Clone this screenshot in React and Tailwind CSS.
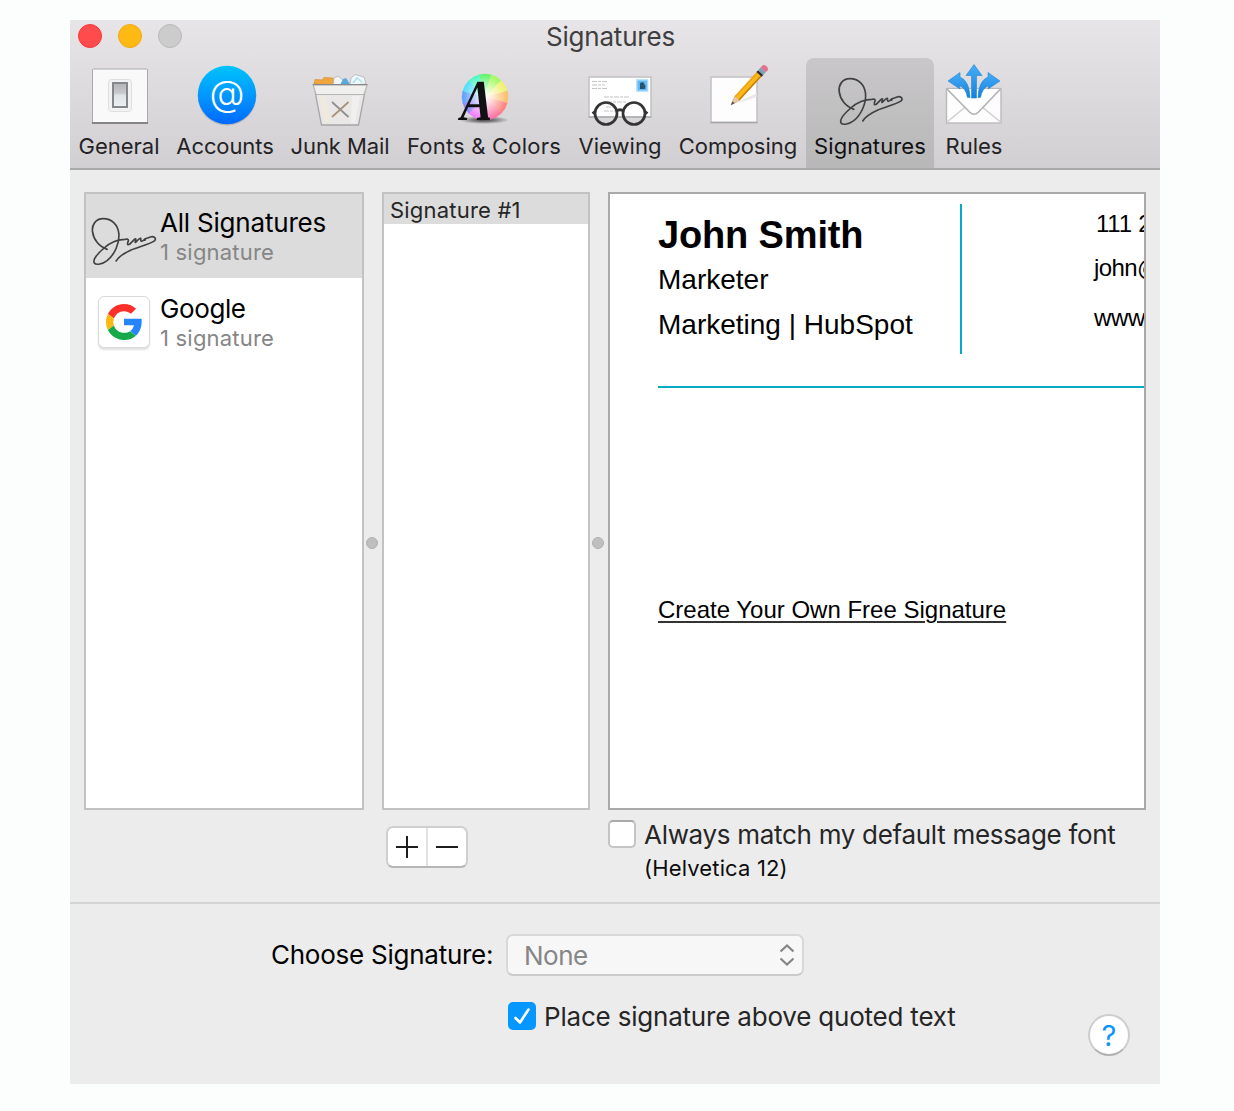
const SIGNATURE_PATH =
  "M217 213 C224 200 240 190 262 180 C285 171 320 162 333 152 C338 144 330 138 320 141 L305 146 C299 150 301 152 304 150 M303 147 C296 155 290 157 291 148 C292 141 285 146 276 157 L274 157 C277 147 277 144 272 148 L257 163 C250 167 250 160 254 152 C254 145 245 148 238 149 C225 148 200 157 181 174 C160 192 147 207 151 218 C157 227 177 222 190 212 C212 194 228 160 225 130 C222 105 205 86 178 86 C155 86 144 105 146 124 C149 148 165 170 190 178";

function Scribble({ transform }) {
  return (
    <g transform={transform} fill="none" stroke="#414143" strokeWidth="5" strokeLinecap="round" strokeLinejoin="round">
      <path d={SIGNATURE_PATH} />
    </g>
  );
}

function GeneralIcon() {
  return (
    <>
      <defs>
        <linearGradient id="rocker" x1="0" y1="0" x2="0" y2="1">
          <stop offset="0" stopColor="#b4b4b6" />
          <stop offset=".42" stopColor="#c9c9cb" />
          <stop offset=".5" stopColor="#dfe3e6" />
          <stop offset="1" stopColor="#eff1f3" />
        </linearGradient>
      </defs>
      <rect x="92.5" y="69" width="55" height="54.5" rx="1" fill="#f9f9fa" stroke="#a9a9ac" />
      <path d="M92 123h56" stroke="#858588" strokeWidth="2" />
      <rect x="108.5" y="79.5" width="23" height="32" rx="3" fill="#f3f3f4" stroke="#dededf" />
      <rect x="113" y="83" width="14" height="24" fill="url(#rocker)" stroke="#85888b" strokeWidth="2" />
    </>
  );
}

function AccountsIcon() {
  return (
    <>
      <defs>
        <linearGradient id="at" x1="0" y1="0" x2="0" y2="1">
          <stop offset="0" stopColor="#00c3fb" />
          <stop offset=".5" stopColor="#0298ff" />
          <stop offset="1" stopColor="#0069fc" />
        </linearGradient>
      </defs>
      <circle cx="227" cy="96.3" r="29.3" fill="#000" opacity=".14" />
      <circle cx="227" cy="95" r="29.2" fill="url(#at)" />
      <text x="227" y="106" textAnchor="middle" fill="#fff" fontSize="36" fontFamily="Inter, sans-serif" fontWeight="300">@</text>
    </>
  );
}

function JunkIcon() {
  return (
    <>
      <path d="M314 84 L315 79.5 L322 80 L324 77.5 L333 78 L334 85z" fill="#f0a63f" stroke="#d88f38" strokeWidth=".7" />
      <path d="M333 85 L334 78 L338 76 L343 80 L345 85z" fill="#f4f6f6" stroke="#aab0b4" strokeWidth=".8" />
      <path d="M340 85 L343 79 L346 78 L350 84 V86z" fill="#59a9df" />
      <path d="M350 85 L351 78 L355 74.5 L364 77 L366 84z" fill="#eef7fa" stroke="#aab5bb" strokeWidth=".8" />
      <path d="M353 83 L357 78 L362 82" fill="none" stroke="#a9dff0" strokeWidth="1.4" />
      <path d="M315.5 94 L321.5 125 H358.5 L364.5 94z" fill="#e9e8e7" stroke="#a5a5a6" strokeWidth="1.3" />
      <path d="M319 96 L325 122 H330 L326 96z" fill="#efe9de" />
      <path d="M352 96 H360 L355 123 H351z" fill="#f0f0f0" />
      <path d="M313 84.7 H367.3 L364 94.5 H316z" fill="#f0f0ef" stroke="#b5b5b6" strokeWidth="1.2" />
      <path d="M313 84.7 H367" stroke="#88888a" strokeWidth="1.2" />
      <path d="M332 102 L348.5 117" stroke="#8f8f8f" strokeWidth="1.7" />
      <path d="M348.5 102 L332 117" stroke="#a8937a" strokeWidth="1.7" />
    </>
  );
}

const WHEEL = ["#5df36c", "#a2f95a", "#f0f06a", "#fdbb66", "#fd7d78", "#fb6f9b", "#f870d8", "#ef7bfb", "#8b83fb", "#5b9cfb", "#4fdcfb", "#4cf7c6"];

function FontsIcon() {
  const point = (deg) => {
    const a = ((deg - 105) * Math.PI) / 180;
    return `${485 + 23 * Math.cos(a)} ${97 + 23 * Math.sin(a)}`;
  };
  return (
    <>
      <defs>
        <radialGradient id="glow">
          <stop offset="0" stopColor="#fff" />
          <stop offset=".35" stopColor="#fff" stopOpacity=".7" />
          <stop offset=".85" stopColor="#fff" stopOpacity=".15" />
          <stop offset="1" stopColor="#fff" stopOpacity="0" />
        </radialGradient>
        <radialGradient id="ground">
          <stop offset="0" stopColor="#000" stopOpacity=".75" />
          <stop offset="1" stopColor="#000" stopOpacity="0" />
        </radialGradient>
      </defs>
      <ellipse cx="484" cy="120" rx="25" ry="4" fill="url(#ground)" />
      {WHEEL.map((color, i) => (
        <path key={color} fill={color} stroke={color} strokeWidth=".4" d={`M485 97 L${point(i * 30)} A23 23 0 0 1 ${point(i * 30 + 30)}z`} />
      ))}
      <circle cx="485" cy="97" r="23" fill="url(#glow)" />
      <g transform="translate(457.500 120) skewX(-10) scale(.78 1)">
        <text x="0" y="0" fill="#111" fontSize="58" fontFamily="Liberation Serif, serif" fontWeight="700">A</text>
      </g>
    </>
  );
}

function ViewingIcon() {
  return (
    <>
      <rect x="589" y="77" width="62" height="40" fill="#fff" stroke="#c3c3c5" strokeWidth="1.6" />
      <path d="M588.5 117H651.5" stroke="#adadaf" strokeWidth="1.6" />
      <g stroke="#c4c4c6" strokeWidth="1.2" strokeDasharray="5 1 3 1">
        <path d="M592 81.5h15M592 85h13M592 88.500h16" />
        <path d="M604 97h26M607 102h19M606 107h10M604 111h12" />
      </g>
      <rect x="637" y="80" width="10.500" height="11" fill="#5fb8f8" stroke="#a5d8fa" strokeWidth="1.500" />
      <path d="M640 83 L643 82 L645.500 86 L645 89 L640 89z" fill="#28546f" />
      <g fill="none" stroke="#343435" strokeWidth="2.700">
        <circle cx="606" cy="113.500" r="11" />
        <circle cx="634" cy="113.500" r="11" />
        <path d="M616.500 111 Q620 108.500 623.500 111M595 111.500 L592.500 113.500M645 111.500 L647.500 113.500" />
      </g>
    </>
  );
}

function ComposingIcon() {
  return (
    <>
      <rect x="711" y="77" width="46" height="45.500" fill="#fdfdfd" stroke="#c4c4c6" strokeWidth="1.600" />
      <path d="M710.500 122.500H757.500" stroke="#a6a6a8" strokeWidth="1.600" />
      <path d="M735 104 L757 93 V97z" fill="#e2e2e2" opacity=".8" />
      <g transform="translate(731 105) rotate(-47.500)">
        <path d="M0 0 L10 -3.300 V3.300z" fill="#e9c9a0" stroke="#b5865a" strokeWidth=".5" />
        <path d="M0 0 L3.800 -1.400 V1.400z" fill="#55504c" />
        <path d="M9 -3.300 H42 V3.300 H9z" fill="#fbb917" />
        <path d="M9 -3.300 H42 V-1.500 H9z" fill="#f0a51a" />
        <path d="M9 1.800 H42 V3.300 H9z" fill="#c67b10" />
        <path d="M41.500 -3.500 H44 V3.500 H41.500z" fill="#302c2c" />
        <path d="M44 -3.500 H47.500 V3.500 H44z" fill="#76a3b8" />
        <path d="M47.500 -3.500 H50.500 Q52.500 -3 52.500 0 Q52.500 3 50.500 3.500 H47.500z" fill="#e5718d" />
      </g>
    </>
  );
}

function SignaturesIcon() {
  return <Scribble transform="translate(790.500 50) scale(.33333)" />;
}

function RulesIcon() {
  return (
    <>
      <defs>
        <linearGradient id="arrow" x1="0" y1="0" x2="0" y2="1">
          <stop offset="0" stopColor="#45acf8" />
          <stop offset="1" stopColor="#1582dc" />
        </linearGradient>
      </defs>
      <rect x="946.500" y="88.500" width="54.500" height="34.500" fill="#fdfdfd" stroke="#b9b9bb" strokeWidth="1.400" />
      <path d="M946.500 122.500 L966.500 106M1001 122.500 L981 106" stroke="#cfcfd1" strokeWidth="1.500" />
      <path d="M947 89 L969.500 112 Q974 116.500 978.500 112 L1000.500 89" fill="#fff" stroke="#b2b2b4" strokeWidth="1.600" />
      <g fill="url(#arrow)" stroke="#2a84cc" strokeWidth=".6">
        <path d="M974 64.500 L982 75.500 H976.500 V98 H971.500 V75.500 H966z" />
        <path d="M948 81 L960 72.500 V77 Q969.500 81 970 97.500 H967.500 Q966 88.500 959.500 85.500 L960 89z" />
        <path d="M1000 81 L988 72.500 V77 Q978.500 81 978 97.500 H980.500 Q982 88.500 988.500 85.500 L988 89z" />
      </g>
    </>
  );
}

const TABS = [
  { label: "General", width: "w-[98px]", box: "83 60 72 72", Icon: GeneralIcon, shift: "" },
  { label: "Accounts", width: "w-[114px]", box: "189 60 72 72", Icon: AccountsIcon, shift: "tracking-[-.1px]" },
  { label: "Junk Mail", width: "w-[116px]", box: "304 60 72 72", Icon: JunkIcon, shift: "tracking-[-.1px]" },
  { label: "Fonts & Colors", width: "w-[172px]", box: "448 60 72 72", Icon: FontsIcon, shift: "tracking-[.2px]" },
  { label: "Viewing", width: "w-[100px]", box: "584 60 72 72", Icon: ViewingIcon, shift: "" },
  { label: "Composing", width: "w-[136px]", box: "702 60 72 72", Icon: ComposingIcon, shift: "" },
  { label: "Signatures", width: "w-[128px]", box: "834 60 72 72", Icon: SignaturesIcon, shift: "tracking-[.1px]", active: true },
  { label: "Rules", width: "w-[80px]", box: "938 60 72 72", Icon: RulesIcon, shift: "" },
];

function Toolbar() {
  return (
    <header className="h-[150px] border-b-2 border-[#a9a8aa] bg-linear-to-b from-[#e7e5e7] to-[#d1cfd1]">
      <div className="relative flex h-[38px] justify-center">
        <div className="absolute left-2 top-1 flex gap-4">
          <span className="size-6 rounded-full border border-[#f9363a] bg-[#ff4b4b]" />
          <span className="size-6 rounded-full border border-[#f3a912] bg-[#ffb914]" />
          <span className="size-6 rounded-full border border-[#b9b9b9] bg-[#cdcccd]" />
        </div>
        <h1 className="-ml-[9px] text-[26px] leading-[34px] tracking-[-.2px] text-[#3f3e40]">Signatures</h1>
      </div>
      <nav className="flex h-[110px]">
        {TABS.map(({ label, width, box, Icon, shift, active }) => (
          <button key={label} className={`flex shrink-0 flex-col items-center pt-0.5 ${width} ${active ? "rounded-t-lg bg-linear-to-b from-[#c9c7c9] to-[#b8b8b8]" : ""}`}>
            <svg viewBox={box} className="size-[72px] shrink-0 overflow-visible">
              <Icon />
            </svg>
            <span className={`whitespace-nowrap text-[22px] leading-[28px] ${shift} ${active ? "text-[#111]" : "text-[#242326]"}`}>{label}</span>
          </button>
        ))}
      </nav>
    </header>
  );
}

function GoogleIcon() {
  return (
    <svg viewBox="0 0 48 48" className="size-9">
      <path fill="#fb3029" d="M24 9.500c3.540 0 6.710 1.220 9.210 3.600l6.850-6.850C35.900 2.380 30.470 0 24 0 14.620 0 6.510 5.380 2.560 13.220l7.980 6.190C12.430 13.720 17.740 9.500 24 9.500z" />
      <path fill="#2684fc" d="M47.500 19.600H24v8.600h13.200c-.6 3-2.300 5.900-5 7.800l7.730 6.190C44.400 38 47.500 31 47.500 24.500z" />
      <path fill="#fcb912" d="M10.530 28.590c-.48-1.450-.76-2.990-.76-4.590s.27-3.140.76-4.590l-7.980-6.190C.92 16.460 0 20.120 0 24c0 3.880.92 7.540 2.560 10.780l7.970-6.190z" />
      <path fill="#16a94a" d="M24 48c6.480 0 11.930-2.130 15.890-5.810l-7.730-6c-2.150 1.450-4.920 2.300-8.160 2.300-6.260 0-11.570-4.220-13.470-9.910l-7.980 6.190C6.510 42.620 14.620 48 24 48z" />
    </svg>
  );
}

function AccountText({ title, tracking }) {
  return (
    <div className="whitespace-nowrap pt-[13px]">
      <div className={`text-[26px] leading-[31px] text-black ${tracking}`}>{title}</div>
      <div className="text-[22px] leading-[29px] tracking-[.2px] text-[#868686]">1 signature</div>
    </div>
  );
}

function Grip() {
  return (
    <div className="flex w-[18px] shrink-0 items-center justify-center pr-0.5 pt-[83px]">
      <span className="size-3 rounded-full border border-[#b1b1b1] bg-[#bfbfbf]" />
    </div>
  );
}

function Editor() {
  return (
    <section className="flex w-[538px] shrink-0 flex-col overflow-hidden whitespace-nowrap border-2 border-[#a9a9a9] bg-white pl-12 font-['Liberation_Sans',Arial,sans-serif] text-black">
      <div className="flex h-[192px] shrink-0 pt-2.5">
        <div className="w-[302px] shrink-0 pt-[9px]">
          <div className="text-[38px] font-bold leading-[44px] tracking-[-.15px]">John Smith</div>
          <div className="text-[28px] leading-[46px]">Marketer</div>
          <div className="text-[28px] leading-[43px]">Marketing | HubSpot</div>
        </div>
        <div className="h-[150px] w-0.5 shrink-0 bg-[#04abc1]" />
        <div className="pl-[132px] text-[24px]">
          <div className="pl-0.5 leading-[40px] tracking-[-.2px]">111 2</div>
          <div className="pt-1 leading-[40px] tracking-[-.6px]">john@</div>
          <div className="pt-[10px] leading-[40px] tracking-[-.3px]">www</div>
        </div>
      </div>
      <div className="h-0.5 shrink-0 bg-[#04abc1]" />
      <a className="mt-[206px] text-[24px] leading-[31px] underline decoration-[#333] decoration-2 underline-offset-[3px]">Create Your Own Free Signature</a>
    </section>
  );
}

export default function App() {
  return (
    <div className="h-[1111px] w-[1234px] overflow-hidden bg-[#fcfefd] pl-[70px] pt-5 font-[Inter,sans-serif]">
      <main className="h-[1064px] w-[1090px] bg-[#ececec]">
        <Toolbar />
        <div className="flex h-[640px] px-3.5 pt-[22px]">
          <section className="w-[280px] shrink-0 border-2 border-[#c2c2c2] bg-white">
            <div className="flex h-[84px] bg-[#dcdcdc]">
              <svg viewBox="86 194 74 84" className="h-[84px] w-[74px] shrink-0">
                <Scribble transform="translate(43.800 190) scale(.33333)" />
              </svg>
              <AccountText title="All Signatures" tracking="tracking-[-.2px]" />
            </div>
            <div className="mt-0.5 flex h-[84px]">
              <div className="flex w-[74px] shrink-0 justify-center pt-4">
                <div className="ml-0.5 flex size-[52px] items-center justify-center rounded-md border border-[#dadada] bg-white shadow-[0_2px_2px_rgba(0,0,0,0.12)]">
                  <GoogleIcon />
                </div>
              </div>
              <AccountText title="Google" tracking="tracking-[-.4px]" />
            </div>
          </section>
          <Grip />
          <section className="w-[208px] shrink-0 border-2 border-[#c2c2c2] bg-white">
            <div className="h-[30px] bg-[#dcdcdc] pl-1.5 text-[22px] leading-[32px] tracking-[.2px] text-[#262626]">Signature #1</div>
          </section>
          <Grip />
          <Editor />
        </div>
        <div className="flex h-[94px] border-b-2 border-[#d4d4d4]">
          <div className="ml-[316px] mt-4 flex h-[42px] w-[82px] rounded-[7px] border-2 border-[#cfcfcf] border-b-[#b5b5b5] bg-white">
            <button className="flex flex-1 items-center justify-center border-r-2 border-[#e2e2e2]">
              <svg viewBox="0 0 22 22" className="size-[22px]"><path d="M11 0v22M0 11h22" stroke="#1d1d1d" strokeWidth="2" /></svg>
            </button>
            <button className="flex flex-1 items-center justify-center">
              <svg viewBox="0 0 22 22" className="size-[22px]"><path d="M0 11h22" stroke="#1d1d1d" strokeWidth="2" /></svg>
            </button>
          </div>
          <span className="ml-[140px] mt-2.5 size-7 shrink-0 rounded-[5px] border-2 border-[#c4c4c4] border-t-[#a9a9a9] bg-white" />
          <div className="ml-2 whitespace-nowrap">
            <div className="pt-[7px] text-[26px] leading-[36px] tracking-[-.3px] text-[#262626]">Always match my default message font</div>
            <div className="text-[22px] leading-[30px] tracking-[.15px] text-[#0c0c0c]">(Helvetica 12)</div>
          </div>
        </div>
        <div className="relative pt-[30px]">
          <div className="flex items-center pl-[201px]">
            <span className="w-[235px] whitespace-nowrap text-[26px] leading-[42px] tracking-[-.25px] text-black">Choose Signature:</span>
            <button className="flex h-[42px] w-[298px] items-center justify-between rounded-[7px] border-2 border-[#d8d8d8] border-b-[#cbcbcb] bg-[#f7f7f7] pl-4 pr-2 text-[26px] tracking-[-.5px] text-[#868686]">
              None
              <svg viewBox="0 0 14 22" className="h-[22px] w-3.5" fill="none" stroke="#858585" strokeWidth="2.200">
                <path d="M.5 7.500 L7 1.500 L13.500 7.500M.5 14.500 L7 20.500 L13.500 14.500" />
              </svg>
            </button>
          </div>
          <div className="mt-[26px] flex pl-[438px]">
            <span className="flex size-7 items-center justify-center rounded-[5px] bg-[#0597ff]">
              <svg viewBox="0 0 28 28" className="size-7" fill="none" stroke="#fff" strokeWidth="2.600" strokeLinecap="round" strokeLinejoin="round">
                <path d="M7.500 16 L12 20.500 L20.500 7.500" />
              </svg>
            </span>
            <span className="ml-2 whitespace-nowrap text-[26px] leading-[29px] tracking-[-.2px] text-[#262626]">Place signature above quoted text</span>
          </div>
          <button className="absolute left-[1018px] top-[110px] size-[42px] rounded-full border-2 border-[#cdcdcd] border-b-[#b2b2b2] bg-white text-[29px] leading-[37px] text-[#0b95ff]">?</button>
        </div>
      </main>
    </div>
  );
}
